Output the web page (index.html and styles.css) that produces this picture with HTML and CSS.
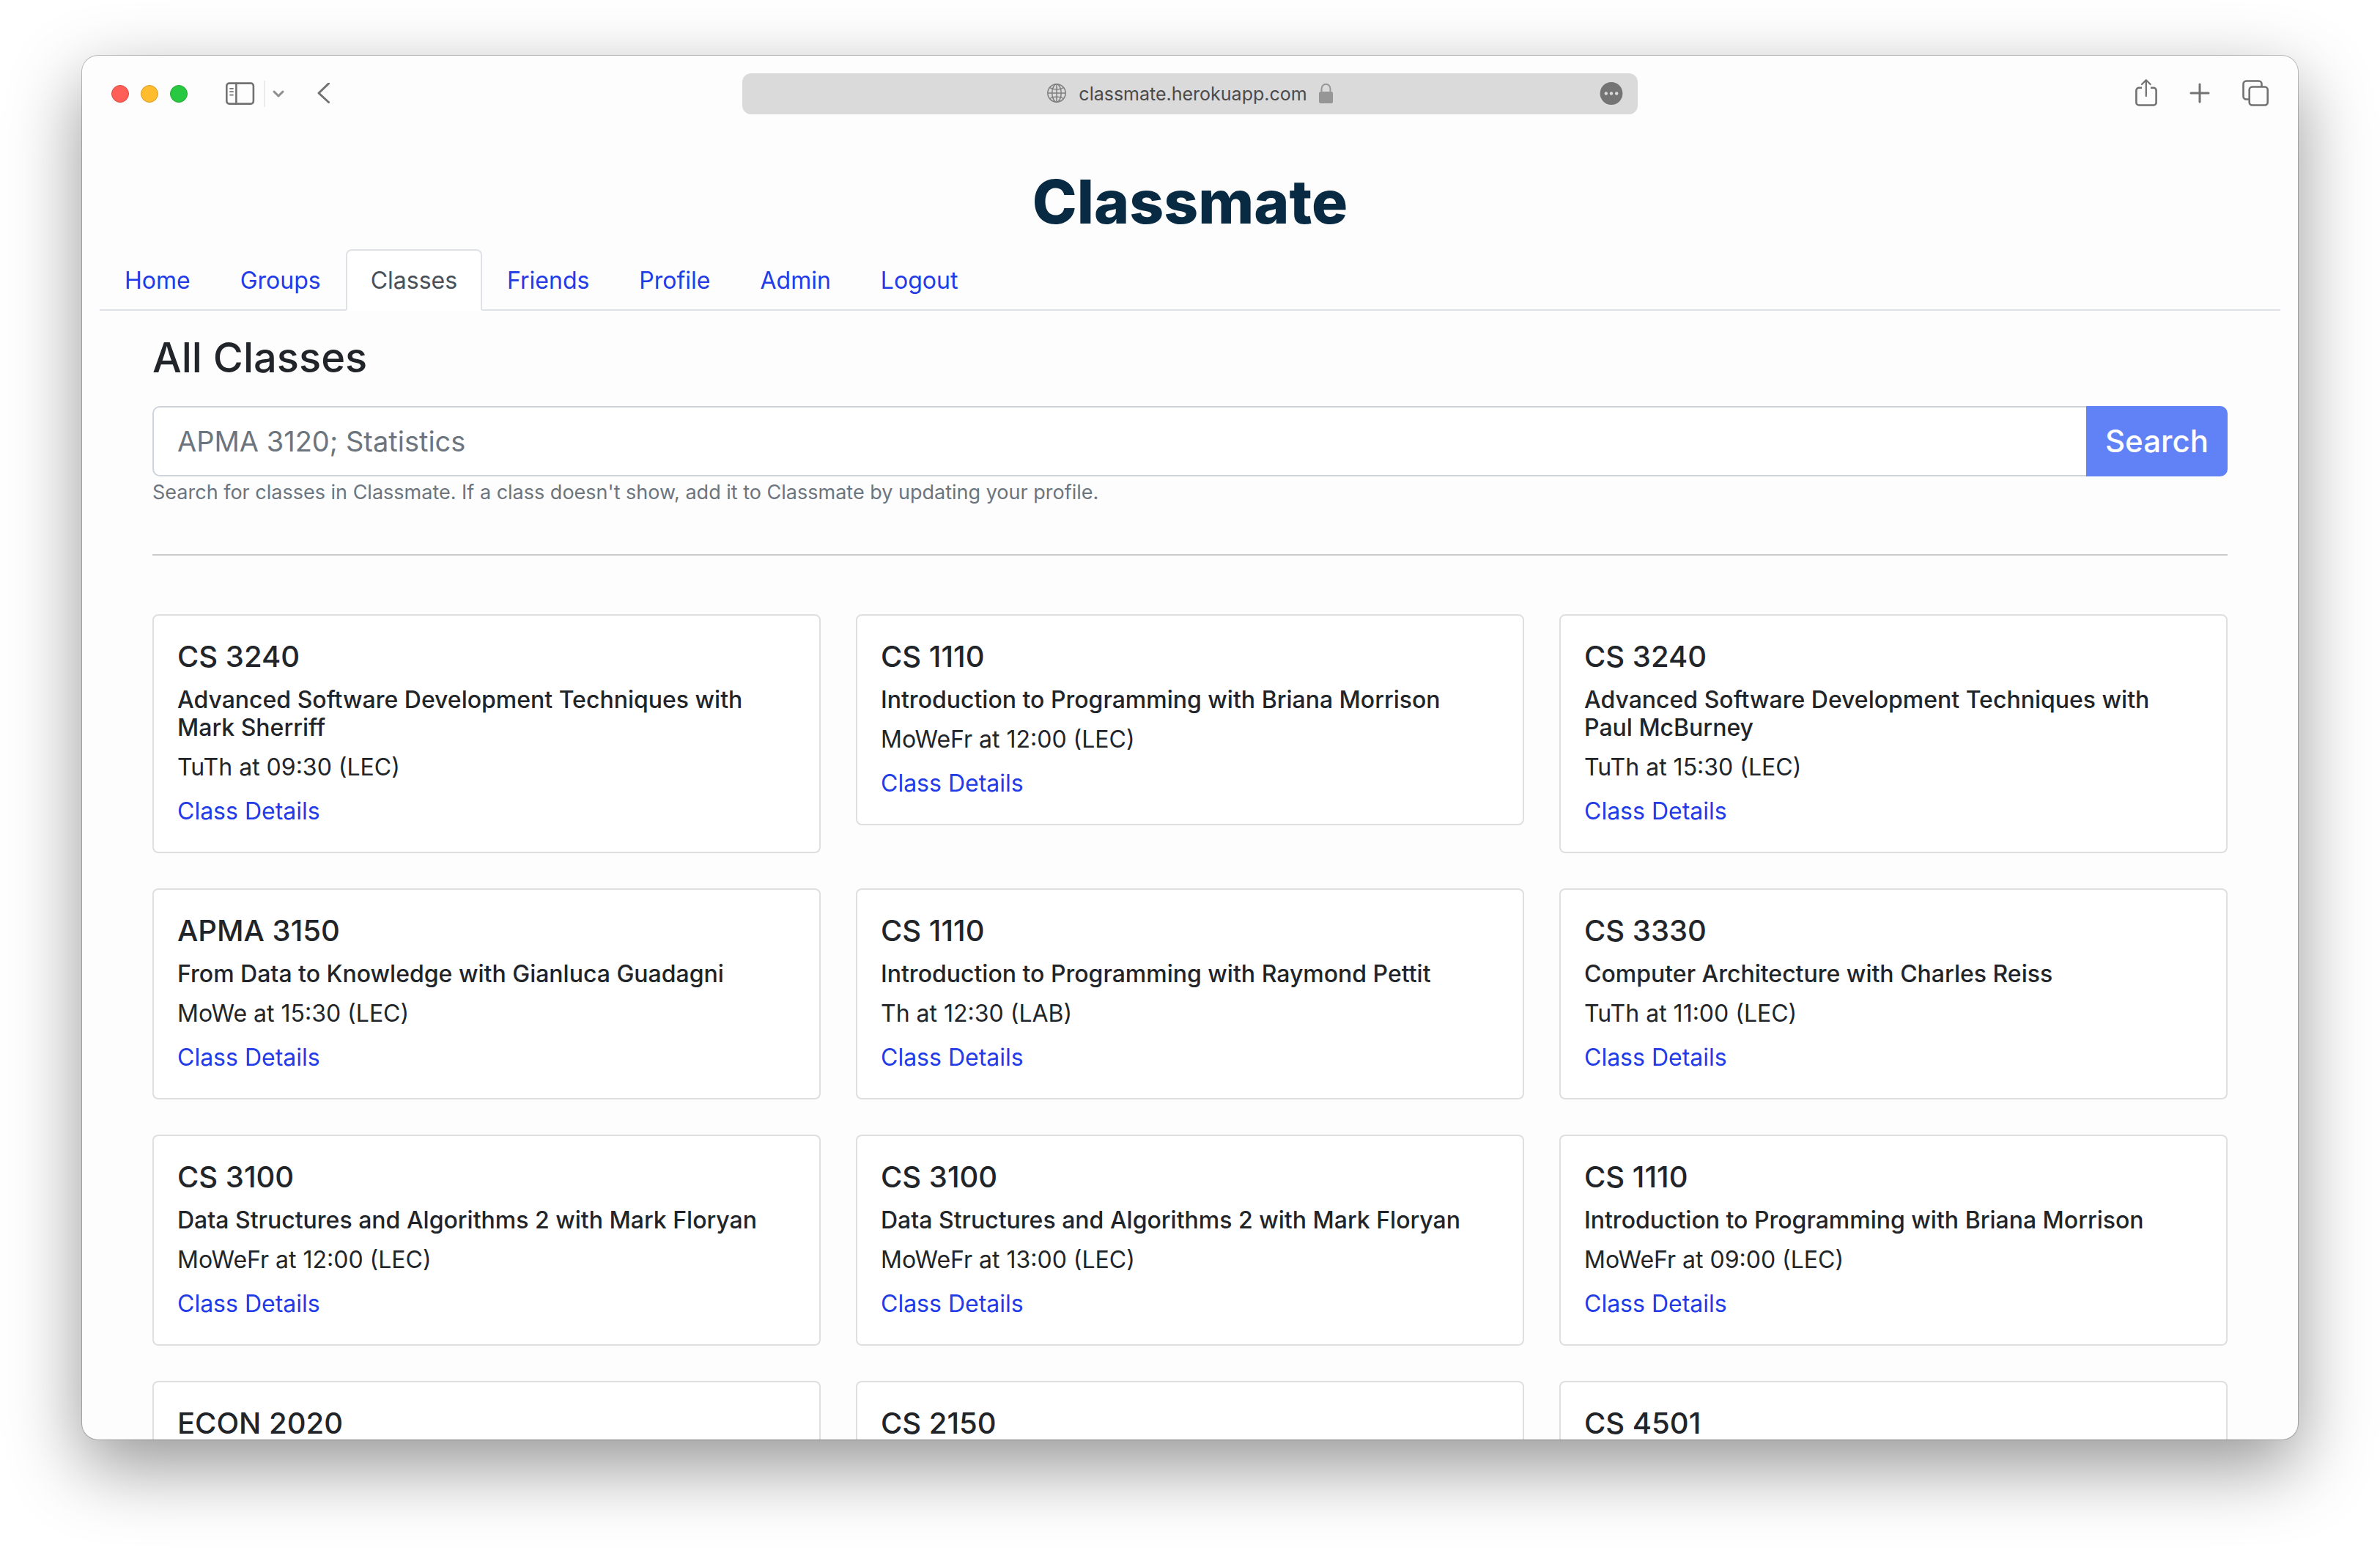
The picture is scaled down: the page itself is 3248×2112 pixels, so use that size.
FILE: index.html
```html
<!DOCTYPE html>
<html lang="en">
<head>
<meta charset="utf-8">
<title>Classmate</title>
<link rel="stylesheet" href="styles.css">
</head>
<body>
<div class="window">
  <header class="toolbar">
    <div class="tools tools-left">
      <div class="lights"><span class="light red"></span><span class="light amber"></span><span class="light green"></span></div>
      <button class="tool sidebar" aria-label="Sidebar"><svg width="40" height="32" viewBox="0 0 40 32" fill="none" stroke="#727272" stroke-width="2.6" stroke-linecap="round"><rect x="1.3" y="1.6" width="36.6" height="28" rx="3.6"/><path d="M14.4 1.8v27.6"/><path d="M6 8.8h4M6 13.200h4M6 17.600h4" stroke-width="1.8"/></svg></button>
      <span class="divider"></span>
      <button class="tool menu" aria-label="Tab groups"><svg width="16" height="12" viewBox="0 0 16 12" fill="none" stroke="#8e8e90" stroke-width="3" stroke-linecap="round" stroke-linejoin="round"><path d="M2 3l6 6 6-6"/></svg></button>
      <button class="tool" aria-label="Back"><svg width="18" height="30" viewBox="0 0 18 30" fill="none" stroke="#727272" stroke-width="3" stroke-linecap="round" stroke-linejoin="round"><path d="M15.500 1L2 14l13.500 12.500"/></svg></button>
    </div>
    <div class="address">
      <div class="site">
        <svg width="28" height="28" viewBox="0 0 28 28" fill="none" stroke="#7f7f7f" stroke-width="1.5"><circle cx="14" cy="13" r="12.200"/><ellipse cx="14" cy="13" rx="6.200" ry="12.200"/><path d="M14 .8v24.400M1.800 13h24.400M4.500 5.500c5 3.400 14 3.400 19 0M4.500 20.500c5-3.400 14-3.400 19 0"/></svg>
        <span class="url">classmate.herokuapp.com</span>
        <svg width="20" height="28" viewBox="0 0 20 28"><rect x="0" y="11" width="19" height="16" rx="2.500" fill="#969696"/><path d="M3.500 12V7a6 6.200 0 0 1 12 0V12" fill="none" stroke="#969696" stroke-width="2"/></svg>
      </div>
      <button class="tool more" aria-label="More"><svg width="32" height="32" viewBox="0 0 32 32"><circle cx="16" cy="15.500" r="15.400" fill="#747474"/><g fill="#dadada"><circle cx="8.800" cy="15.500" r="2.200"/><circle cx="16" cy="15.500" r="2.200"/><circle cx="23.200" cy="15.500" r="2.200"/></g></svg></button>
    </div>
    <div class="tools tools-right">
      <button class="tool" aria-label="Share"><svg width="30" height="40" viewBox="0 0 30 40" fill="none" stroke="#727272" stroke-width="2.600" stroke-linecap="round" stroke-linejoin="round"><path d="M9 11.800H5a3.600 3.600 0 0 0-3.600 3.600v16.500A3.600 3.600 0 0 0 5 35.500h20a3.600 3.600 0 0 0 3.600-3.600V15.400a3.600 3.600 0 0 0-3.600-3.600h-4" stroke-linecap="butt"/><path d="M14.800 23V1.500M9 7L14.800 1.200l5.800 5.800" stroke-width="2.300"/></svg></button>
      <button class="tool" aria-label="New tab"><svg width="28" height="30" viewBox="0 0 28 30" stroke="#727272" stroke-width="3" stroke-linecap="round"><path d="M14 2v24M2 14h24"/></svg></button>
      <button class="tool" aria-label="Tab overview"><svg width="36" height="38" viewBox="0 0 36 38" fill="none" stroke="#727272" stroke-width="2.600"><path d="M9.500 26.500H5.500a4 4 0 0 1-4-4v-17a4 4 0 0 1 4-4h17a4 4 0 0 1 4 4v4"/><rect x="9.700" y="9.500" width="25" height="25" rx="4"/></svg></button>
    </div>
  </header>

  <div class="page">
    <h1 class="brand">Classmate</h1>
    <nav class="tabs">
      <a class="tab" href="#">Home</a>
      <a class="tab" href="#">Groups</a>
      <a class="tab active" href="#" aria-current="page">Classes</a>
      <a class="tab" href="#">Friends</a>
      <a class="tab" href="#">Profile</a>
      <a class="tab" href="#">Admin</a>
      <a class="tab" href="#">Logout</a>
    </nav>
    <main class="content">
      <h2 class="heading">All Classes</h2>
      <form class="search">
        <input class="search-input" type="text" placeholder="APMA 3120; Statistics" aria-label="Search classes" aria-describedby="search-help">
        <button class="search-button" type="submit">Search</button>
      </form>
      <p class="help" id="search-help">Search for classes in Classmate. If a class doesn't show, add it to Classmate by updating your profile.</p>
      <hr class="rule">
      <div class="cards">
        <article class="card"><h3 class="code">CS 3240</h3><h4 class="name">Advanced Software Development Techniques with Mark Sherriff</h4><p class="time">TuTh at 09:30 (LEC)</p><a class="details" href="#">Class Details</a></article>
        <article class="card"><h3 class="code">CS 1110</h3><h4 class="name">Introduction to Programming with Briana Morrison</h4><p class="time">MoWeFr at 12:00 (LEC)</p><a class="details" href="#">Class Details</a></article>
        <article class="card"><h3 class="code">CS 3240</h3><h4 class="name">Advanced Software Development Techniques with Paul McBurney</h4><p class="time">TuTh at 15:30 (LEC)</p><a class="details" href="#">Class Details</a></article>
        <article class="card"><h3 class="code">APMA 3150</h3><h4 class="name">From Data to Knowledge with Gianluca Guadagni</h4><p class="time">MoWe at 15:30 (LEC)</p><a class="details" href="#">Class Details</a></article>
        <article class="card"><h3 class="code">CS 1110</h3><h4 class="name">Introduction to Programming with Raymond Pettit</h4><p class="time">Th at 12:30 (LAB)</p><a class="details" href="#">Class Details</a></article>
        <article class="card"><h3 class="code">CS 3330</h3><h4 class="name">Computer Architecture with Charles Reiss</h4><p class="time">TuTh at 11:00 (LEC)</p><a class="details" href="#">Class Details</a></article>
        <article class="card"><h3 class="code">CS 3100</h3><h4 class="name">Data Structures and Algorithms 2 with Mark Floryan</h4><p class="time">MoWeFr at 12:00 (LEC)</p><a class="details" href="#">Class Details</a></article>
        <article class="card"><h3 class="code">CS 3100</h3><h4 class="name">Data Structures and Algorithms 2 with Mark Floryan</h4><p class="time">MoWeFr at 13:00 (LEC)</p><a class="details" href="#">Class Details</a></article>
        <article class="card"><h3 class="code">CS 1110</h3><h4 class="name">Introduction to Programming with Briana Morrison</h4><p class="time">MoWeFr at 09:00 (LEC)</p><a class="details" href="#">Class Details</a></article>
        <article class="card"><h3 class="code">ECON 2020</h3></article>
        <article class="card"><h3 class="code">CS 2150</h3></article>
        <article class="card"><h3 class="code">CS 4501</h3></article>
      </div>
    </main>
  </div>
</div>
</body>
</html>
```
FILE: styles.css
```css
* { box-sizing: border-box; }

body {
  margin: 0;
  height: 100vh;
  padding: 76px 112px 148px;
  background: #fff;
  color: #212529;
  font: 400 32px/48px Inter, "Liberation Sans", sans-serif;
}

h1, h2, h3, h4, p { margin: 0; }
a { color: #213be6; text-decoration: none; }
button { font: inherit; border: 0; padding: 0; background: none; }
svg { display: block; flex: none; }

.window {
  height: 100%;
  display: flex;
  flex-direction: column;
  overflow: hidden;
  border-radius: 22px;
  background: #fdfdfd;
  box-shadow: 0 0 0 1px rgba(0, 0, 0, .22), 0 36px 100px rgba(0, 0, 0, .42);
}

.toolbar {
  flex: none;
  height: 104px;
  padding: 0 40px;
  display: grid;
  grid-template-columns: 1fr 1222px 1fr;
  align-items: center;
}
.tools { display: flex; align-items: center; }
.tools-right { justify-content: flex-end; gap: 44px; }
.lights { display: flex; gap: 16px; margin-right: 52px; }
.light { width: 24px; height: 24px; border-radius: 50%; border: 1px solid; }
.red { background: #ff5f57; border-color: #d94a43; }
.amber { background: #febc2e; border-color: #d69d2a; }
.green { background: #28c840; border-color: #24a634; }
.tool { display: flex; flex: none; }
.sidebar { margin-right: 12px; }
.divider { width: 2px; height: 36px; margin-right: 10px; background: #ececec; }
.menu { margin-right: 45px; }

.address {
  height: 56px;
  padding: 0 20px;
  display: grid;
  grid-template-columns: 1fr auto 1fr;
  align-items: center;
  border-radius: 12px;
  background: #dadada;
}
.site { grid-column: 2; display: flex; align-items: center; gap: 16px; }
.more { justify-self: end; }
.url { font-size: 25px; line-height: 32px; color: #4a4a4a; }

.page { flex: 1; min-height: 0; padding: 48px 24px 0; overflow: hidden; }
.brand {
  margin-bottom: 16px;
  text-align: center;
  font-size: 82px;
  line-height: 96px;
  font-weight: 800;
  color: #082a43;
}

.tabs { display: flex; box-shadow: inset 0 -2px #dee2e6; }
.tab {
  padding: 17px 32px 15px;
  border: 2px solid transparent;
  border-radius: 8px 8px 0 0;
}
.tab.active {
  color: #495057;
  background: #fff;
  border-color: #dee2e6 #dee2e6 #fff;
}

.content { padding: 29px 72px 0; }
.heading { margin-bottom: 31px; font-size: 56px; line-height: 70px; font-weight: 500; }

.search { display: flex; height: 96px; }
.search-input {
  flex: 1;
  min-width: 0;
  padding: 0 32px;
  border: 2px solid #ced4da;
  border-right: 0;
  border-radius: 10px 0 0 10px;
  background: #fff;
  color: #495057;
  font: inherit;
  font-size: 38px;
}
.search-input::placeholder { color: #6c757d; opacity: 1; }
.search-button {
  padding: 0 26px;
  border-radius: 0 10px 10px 0;
  background: #6082f6;
  color: #fff;
  font-size: 42px;
  font-weight: 500;
}
.help { font-size: 27px; line-height: 44px; color: #6c757d; }
.rule { margin: 62px 0 80px; border: 0; border-top: 2px solid #cacaca; }

.cards {
  display: grid;
  grid-template-columns: repeat(3, 1fr);
  gap: 48px;
  align-items: start;
}
.card {
  min-height: 288px;
  padding: 34px 32px 31px;
  border: 2px solid #dfdfdf;
  border-radius: 8px;
  background: #fff;
}
.code { margin-bottom: 18px; font-size: 40px; line-height: 44px; font-weight: 500; }
.name { margin-bottom: 11px; font-size: 32px; line-height: 38px; font-weight: 500; }
.time { margin-bottom: 12px; }
.details { display: block; width: fit-content; }
```
